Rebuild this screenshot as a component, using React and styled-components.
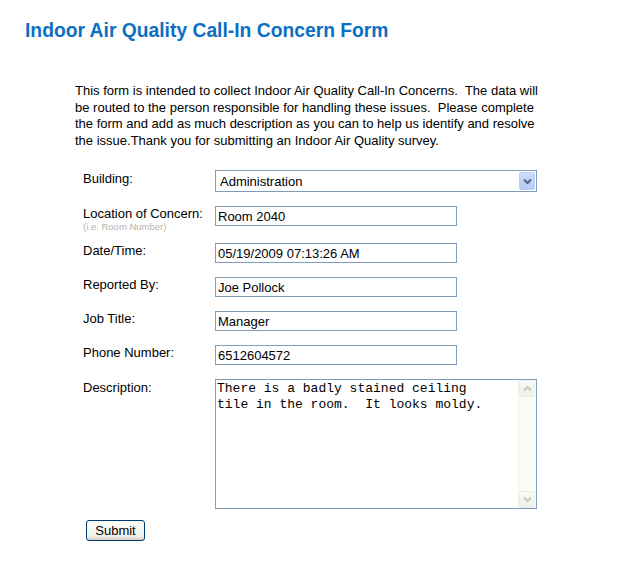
import React from "react";
import styled, { createGlobalStyle } from "styled-components";

const Global = createGlobalStyle`
  html, body { margin: 0; padding: 0; background: #fff; }
  body { font-family: Arial, "Liberation Sans", sans-serif; color: #000; }
`;

const Page = styled.div`
  width: 625px;
  height: 571px;
  padding: 20px 0 0 25px;
  box-sizing: border-box;
`;

const Title = styled.h1`
  margin: 0;
  font-family: Arial, "Liberation Sans", sans-serif;
  font-weight: bold;
  font-size: 19.3px;
  line-height: 22px;
  color: #0b70c1;
`;

const Body = styled.div`
  padding: 41px 0 0 50px;
`;

const Intro = styled.p`
  margin: 0;
  width: 470px;
  font-size: 13px;
  line-height: 16.6px;
  color: #000;
`;

const Form = styled.form`
  margin: 21px 0 0 8px;
  display: flex;
  flex-direction: column;
  gap: 14px;
`;

const Row = styled.div`
  display: grid;
  grid-template-columns: 132px auto;
  align-items: start;
  height: ${(p) => (p.$h ? `${p.$h}px` : "auto")};
`;

const Label = styled.label`
  font-size: 13px;
  line-height: 15px;
  padding-top: ${(p) => p.$pt ?? 0}px;
  display: flex;
  flex-direction: column;
`;

const Hint = styled.span`
  font-size: 9.5px;
  line-height: 9px;
  margin-top: 1px;
  color: #b4b4b4;
`;

const TextInput = styled.input`
  box-sizing: border-box;
  width: 242px;
  height: 20px;
  border: 1px solid #7f9db9;
  padding: 0 2px;
  font-family: Arial, "Liberation Sans", sans-serif;
  font-size: 13px;
  color: #000;
  background: #fff;
  outline: none;
`;

const SelectWrap = styled.div`
  position: relative;
  width: 322px;
  height: 22px;
`;

const Select = styled.select`
  appearance: none;
  -webkit-appearance: none;
  box-sizing: border-box;
  width: 100%;
  height: 100%;
  border: 1px solid #7f9db9;
  border-radius: 0;
  padding: 0 0 0 4px;
  font-family: Arial, "Liberation Sans", sans-serif;
  font-size: 13px;
  color: #000;
  background: #fff;
  outline: none;
`;

const DropButton = styled.span`
  position: absolute;
  top: 2px;
  right: 2px;
  width: 16px;
  height: 18px;
  box-sizing: border-box;
  border: 1px solid #bccff5;
  border-radius: 2px;
  background: linear-gradient(#cfdcfb, #b8cbf7);
  display: flex;
  align-items: center;
  justify-content: center;
  pointer-events: none;
`;

const AreaWrap = styled.div`
  position: relative;
  width: 322px;
  height: 130px;
`;

const TextArea = styled.textarea`
  box-sizing: border-box;
  width: 100%;
  height: 100%;
  border: 1px solid #7f9db9;
  padding: 1px 19px 1px 1px;
  font-family: "Courier New", "Liberation Mono", monospace;
  font-size: 13px;
  line-height: 16px;
  color: #000;
  resize: none;
  overflow: hidden;
  outline: none;
`;

const ScrollBar = styled.div`
  position: absolute;
  top: 1px;
  right: 1px;
  bottom: 1px;
  width: 17px;
  background: #fbfbf8;
  border-left: 1px solid #f1f0ea;
  display: flex;
  flex-direction: column;
  justify-content: space-between;
  pointer-events: none;
`;

const ScrollBtn = styled.span`
  width: 16px;
  height: 17px;
  box-sizing: border-box;
  border: 1px solid #eeede5;
  border-radius: 2px;
  background: linear-gradient(#fafaf7, #efeee8);
  display: flex;
  align-items: center;
  justify-content: center;
`;

const SubmitButton = styled.button`
  margin: -3px 0 0 3px;
  align-self: flex-start;
  width: 59px;
  height: 21px;
  box-sizing: border-box;
  border: 1px solid #003c74;
  border-radius: 3px;
  background: linear-gradient(#ffffff, #f0f0ea 80%, #d6d0c5);
  box-shadow: inset 0 -1px 0 #d6d0c5, inset 0 0 0 1px #f6f6f3;
  font-family: Arial, "Liberation Sans", sans-serif;
  font-size: 13px;
  color: #000;
  padding: 0;
`;

const Chevron = ({ up, color = "#4d6185" }) => (
  <svg width="9" height="7" viewBox="0 0 9 7">
    <path
      d={up ? "M1 5.5 L4.5 2 L8 5.5" : "M1 1.5 L4.5 5 L8 1.5"}
      fill="none"
      stroke={color}
      strokeWidth="2"
    />
  </svg>
);

const fields = [
  { label: "Date/Time:", value: "05/19/2009 07:13:26 AM" },
  { label: "Reported By:", value: "Joe Pollock" },
  { label: "Job Title:", value: "Manager" },
  { label: "Phone Number:", value: "6512604572" },
];

export default function App() {
  return (
    <>
      <Global />
      <Page>
        <Title>Indoor Air Quality Call-In Concern Form</Title>
        <Body>
          <Intro>
            This form is intended to collect Indoor Air Quality Call-In Concerns.&nbsp; The data will
            be routed to the person responsible for handling these issues.&nbsp; Please complete
            the form and add as much description as you can to help us identify and resolve
            the issue.Thank you for submitting an Indoor Air Quality survey.
          </Intro>
          <Form onSubmit={(e) => e.preventDefault()}>
            <Row>
              <Label $pt={1}>Building:</Label>
              <SelectWrap>
                <Select defaultValue="Administration">
                  <option>Administration</option>
                </Select>
                <DropButton>
                  <Chevron />
                </DropButton>
              </SelectWrap>
            </Row>
            <Row $h={23}>
              <Label>
                Location of Concern:
                <Hint>(i.e. Room Number)</Hint>
              </Label>
              <TextInput defaultValue="Room 2040" />
            </Row>
            {fields.map((f) => (
              <Row key={f.label}>
                <Label>{f.label}</Label>
                <TextInput defaultValue={f.value} />
              </Row>
            ))}
            <Row>
              <Label $pt={1}>Description:</Label>
              <AreaWrap>
                <TextArea
                  defaultValue={"There is a badly stained ceiling\ntile in the room.  It looks moldy."}
                />
                <ScrollBar>
                  <ScrollBtn>
                    <Chevron up color="#c9c8c2" />
                  </ScrollBtn>
                  <ScrollBtn>
                    <Chevron color="#c9c8c2" />
                  </ScrollBtn>
                </ScrollBar>
              </AreaWrap>
            </Row>
            <SubmitButton type="submit">Submit</SubmitButton>
          </Form>
        </Body>
      </Page>
    </>
  );
}
